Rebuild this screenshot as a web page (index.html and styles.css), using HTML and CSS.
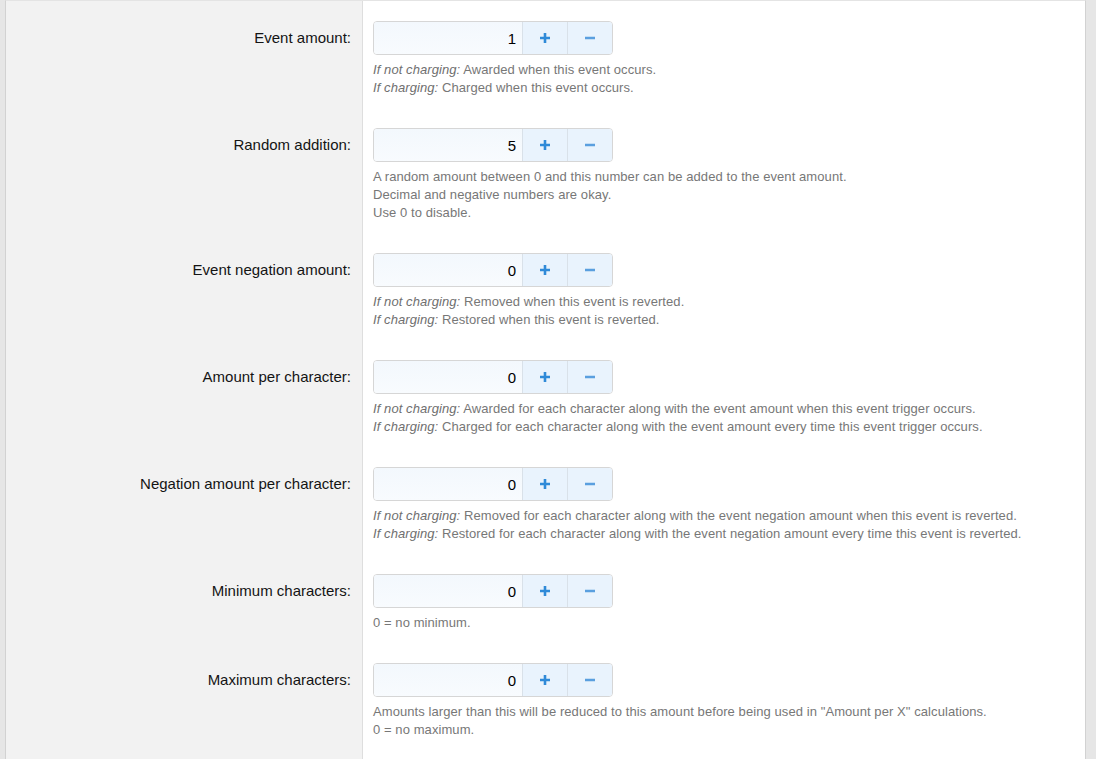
FILE: index.html
```html
<!DOCTYPE html>
<html lang="en">
<head>
    <meta charset="UTF-8">
    <meta name="viewport" content="width=device-width, initial-scale=1.0">
    <title>Event trigger options</title>
    <link rel="stylesheet" href="styles.css">
</head>
<body>

    <div class="form">
        <div class="row">
            <div class="label"><label for="eventAmount">Event amount:</label></div>
            <div class="value">
                <div class="spinbox">
                    <input type="text" id="eventAmount" value="1">
                    <button class="spin plus" aria-label="Increase"><svg viewBox="0 0 12 12"><path d="M6 1v10M1 6h10"/></svg></button>
                    <button class="spin minus" aria-label="Decrease"><svg viewBox="0 0 12 12"><path d="M1 6h10"/></svg></button>
                </div>
                <div class="explain">
                    <i>If not charging:</i> Awarded when this event occurs.<br>
                    <i>If charging:</i> Charged when this event occurs.
                </div>
            </div>
        </div>

        <div class="row">
            <div class="label"><label for="randomAddition">Random addition:</label></div>
            <div class="value">
                <div class="spinbox">
                    <input type="text" id="randomAddition" value="5">
                    <button class="spin plus" aria-label="Increase"><svg viewBox="0 0 12 12"><path d="M6 1v10M1 6h10"/></svg></button>
                    <button class="spin minus" aria-label="Decrease"><svg viewBox="0 0 12 12"><path d="M1 6h10"/></svg></button>
                </div>
                <div class="explain">
                    A random amount between 0 and this number can be added to the event amount.<br>
                    Decimal and negative numbers are okay.<br>
                    Use 0 to disable.
                </div>
            </div>
        </div>

        <div class="row">
            <div class="label"><label for="negationAmount">Event negation amount:</label></div>
            <div class="value">
                <div class="spinbox">
                    <input type="text" id="negationAmount" value="0">
                    <button class="spin plus" aria-label="Increase"><svg viewBox="0 0 12 12"><path d="M6 1v10M1 6h10"/></svg></button>
                    <button class="spin minus" aria-label="Decrease"><svg viewBox="0 0 12 12"><path d="M1 6h10"/></svg></button>
                </div>
                <div class="explain">
                    <i>If not charging:</i> Removed when this event is reverted.<br>
                    <i>If charging:</i> Restored when this event is reverted.
                </div>
            </div>
        </div>

        <div class="row">
            <div class="label"><label for="amountPerChar">Amount per character:</label></div>
            <div class="value">
                <div class="spinbox">
                    <input type="text" id="amountPerChar" value="0">
                    <button class="spin plus" aria-label="Increase"><svg viewBox="0 0 12 12"><path d="M6 1v10M1 6h10"/></svg></button>
                    <button class="spin minus" aria-label="Decrease"><svg viewBox="0 0 12 12"><path d="M1 6h10"/></svg></button>
                </div>
                <div class="explain">
                    <i>If not charging:</i> Awarded for each character along with the event amount when this event trigger occurs.<br>
                    <i>If charging:</i> Charged for each character along with the event amount every time this event trigger occurs.
                </div>
            </div>
        </div>

        <div class="row">
            <div class="label"><label for="negationPerChar">Negation amount per character:</label></div>
            <div class="value">
                <div class="spinbox">
                    <input type="text" id="negationPerChar" value="0">
                    <button class="spin plus" aria-label="Increase"><svg viewBox="0 0 12 12"><path d="M6 1v10M1 6h10"/></svg></button>
                    <button class="spin minus" aria-label="Decrease"><svg viewBox="0 0 12 12"><path d="M1 6h10"/></svg></button>
                </div>
                <div class="explain">
                    <i>If not charging:</i> Removed for each character along with the event negation amount when this event is reverted.<br>
                    <i>If charging:</i> Restored for each character along with the event negation amount every time this event is reverted.
                </div>
            </div>
        </div>

        <div class="row">
            <div class="label"><label for="minChars">Minimum characters:</label></div>
            <div class="value">
                <div class="spinbox">
                    <input type="text" id="minChars" value="0">
                    <button class="spin plus" aria-label="Increase"><svg viewBox="0 0 12 12"><path d="M6 1v10M1 6h10"/></svg></button>
                    <button class="spin minus" aria-label="Decrease"><svg viewBox="0 0 12 12"><path d="M1 6h10"/></svg></button>
                </div>
                <div class="explain">
                    0 = no minimum.
                </div>
            </div>
        </div>

        <div class="row">
            <div class="label"><label for="maxChars">Maximum characters:</label></div>
            <div class="value">
                <div class="spinbox">
                    <input type="text" id="maxChars" value="0">
                    <button class="spin plus" aria-label="Increase"><svg viewBox="0 0 12 12"><path d="M6 1v10M1 6h10"/></svg></button>
                    <button class="spin minus" aria-label="Decrease"><svg viewBox="0 0 12 12"><path d="M1 6h10"/></svg></button>
                </div>
                <div class="explain">
                    Amounts larger than this will be reduced to this amount before being used in "Amount per X" calculations.<br>
                    0 = no maximum.
                </div>
            </div>
        </div>

        <div class="row filler">
            <div class="label"></div>
            <div class="value"></div>
        </div>
    </div>

</body>
</html>
```

FILE: styles.css
```css
body {
    margin: 0;
    font-family: "Liberation Sans", Arial, sans-serif;
    background-color: #e6e6e6;
}
.form {
    display: flex;
    flex-direction: column;
    min-height: 100vh;
    box-sizing: border-box;
    width: 1081px;
    margin-left: 5px;
    background-color: #ffffff;
    border-left: 1px solid #d2d2d2;
    border-right: 1px solid #d2d2d2;
    border-top: 1px solid #e4e4e4;
}
.row {
    display: flex;
}
.row.filler {
    flex: 1;
}
.label {
    flex: 0 0 357px;
    box-sizing: border-box;
    padding: 20px 11px 11px 0;
    background-color: #f2f2f2;
    border-right: 1px solid #dedede;
    text-align: right;
    font-size: 15px;
    line-height: 34px;
    color: #141414;
}
.value {
    flex: 1;
    padding: 20px 10px 11px 10px;
}
/* Number box with + and - buttons */
.spinbox {
    display: flex;
    width: 240px;
    height: 34px;
    box-sizing: border-box;
    border: 1px solid #d6d6d6;
    border-radius: 4px;
    overflow: hidden;
}
.spinbox input {
    width: 148px;
    box-sizing: border-box;
    margin: 0;
    padding: 0 6px 0 6px;
    border: none;
    background: linear-gradient(to bottom, #f3f8fd, #f8fbfe);
    font-family: "Liberation Sans", Arial, sans-serif;
    font-size: 15px;
    color: #000000;
    text-align: right;
    outline: none;
}
.spin {
    width: 45px;
    box-sizing: border-box;
    margin: 0;
    padding: 0;
    border: none;
    border-left: 1px solid #d9e1e9;
    background-color: #e9f3fd;
    display: flex;
    align-items: center;
    justify-content: center;
    cursor: pointer;
}
.spin svg {
    width: 12px;
    height: 12px;
    fill: none;
    stroke-width: 2.6;
}
.spin.plus svg {
    stroke: #2f8ad8;
}
.spin.minus svg {
    stroke: #5a9fdf;
}
.explain {
    margin-top: 6px;
    font-size: 13px;
    letter-spacing: 0.08px;
    line-height: 18px;
    color: #777777;
}
.explain i {
    color: #6f6f6f;
}
```
